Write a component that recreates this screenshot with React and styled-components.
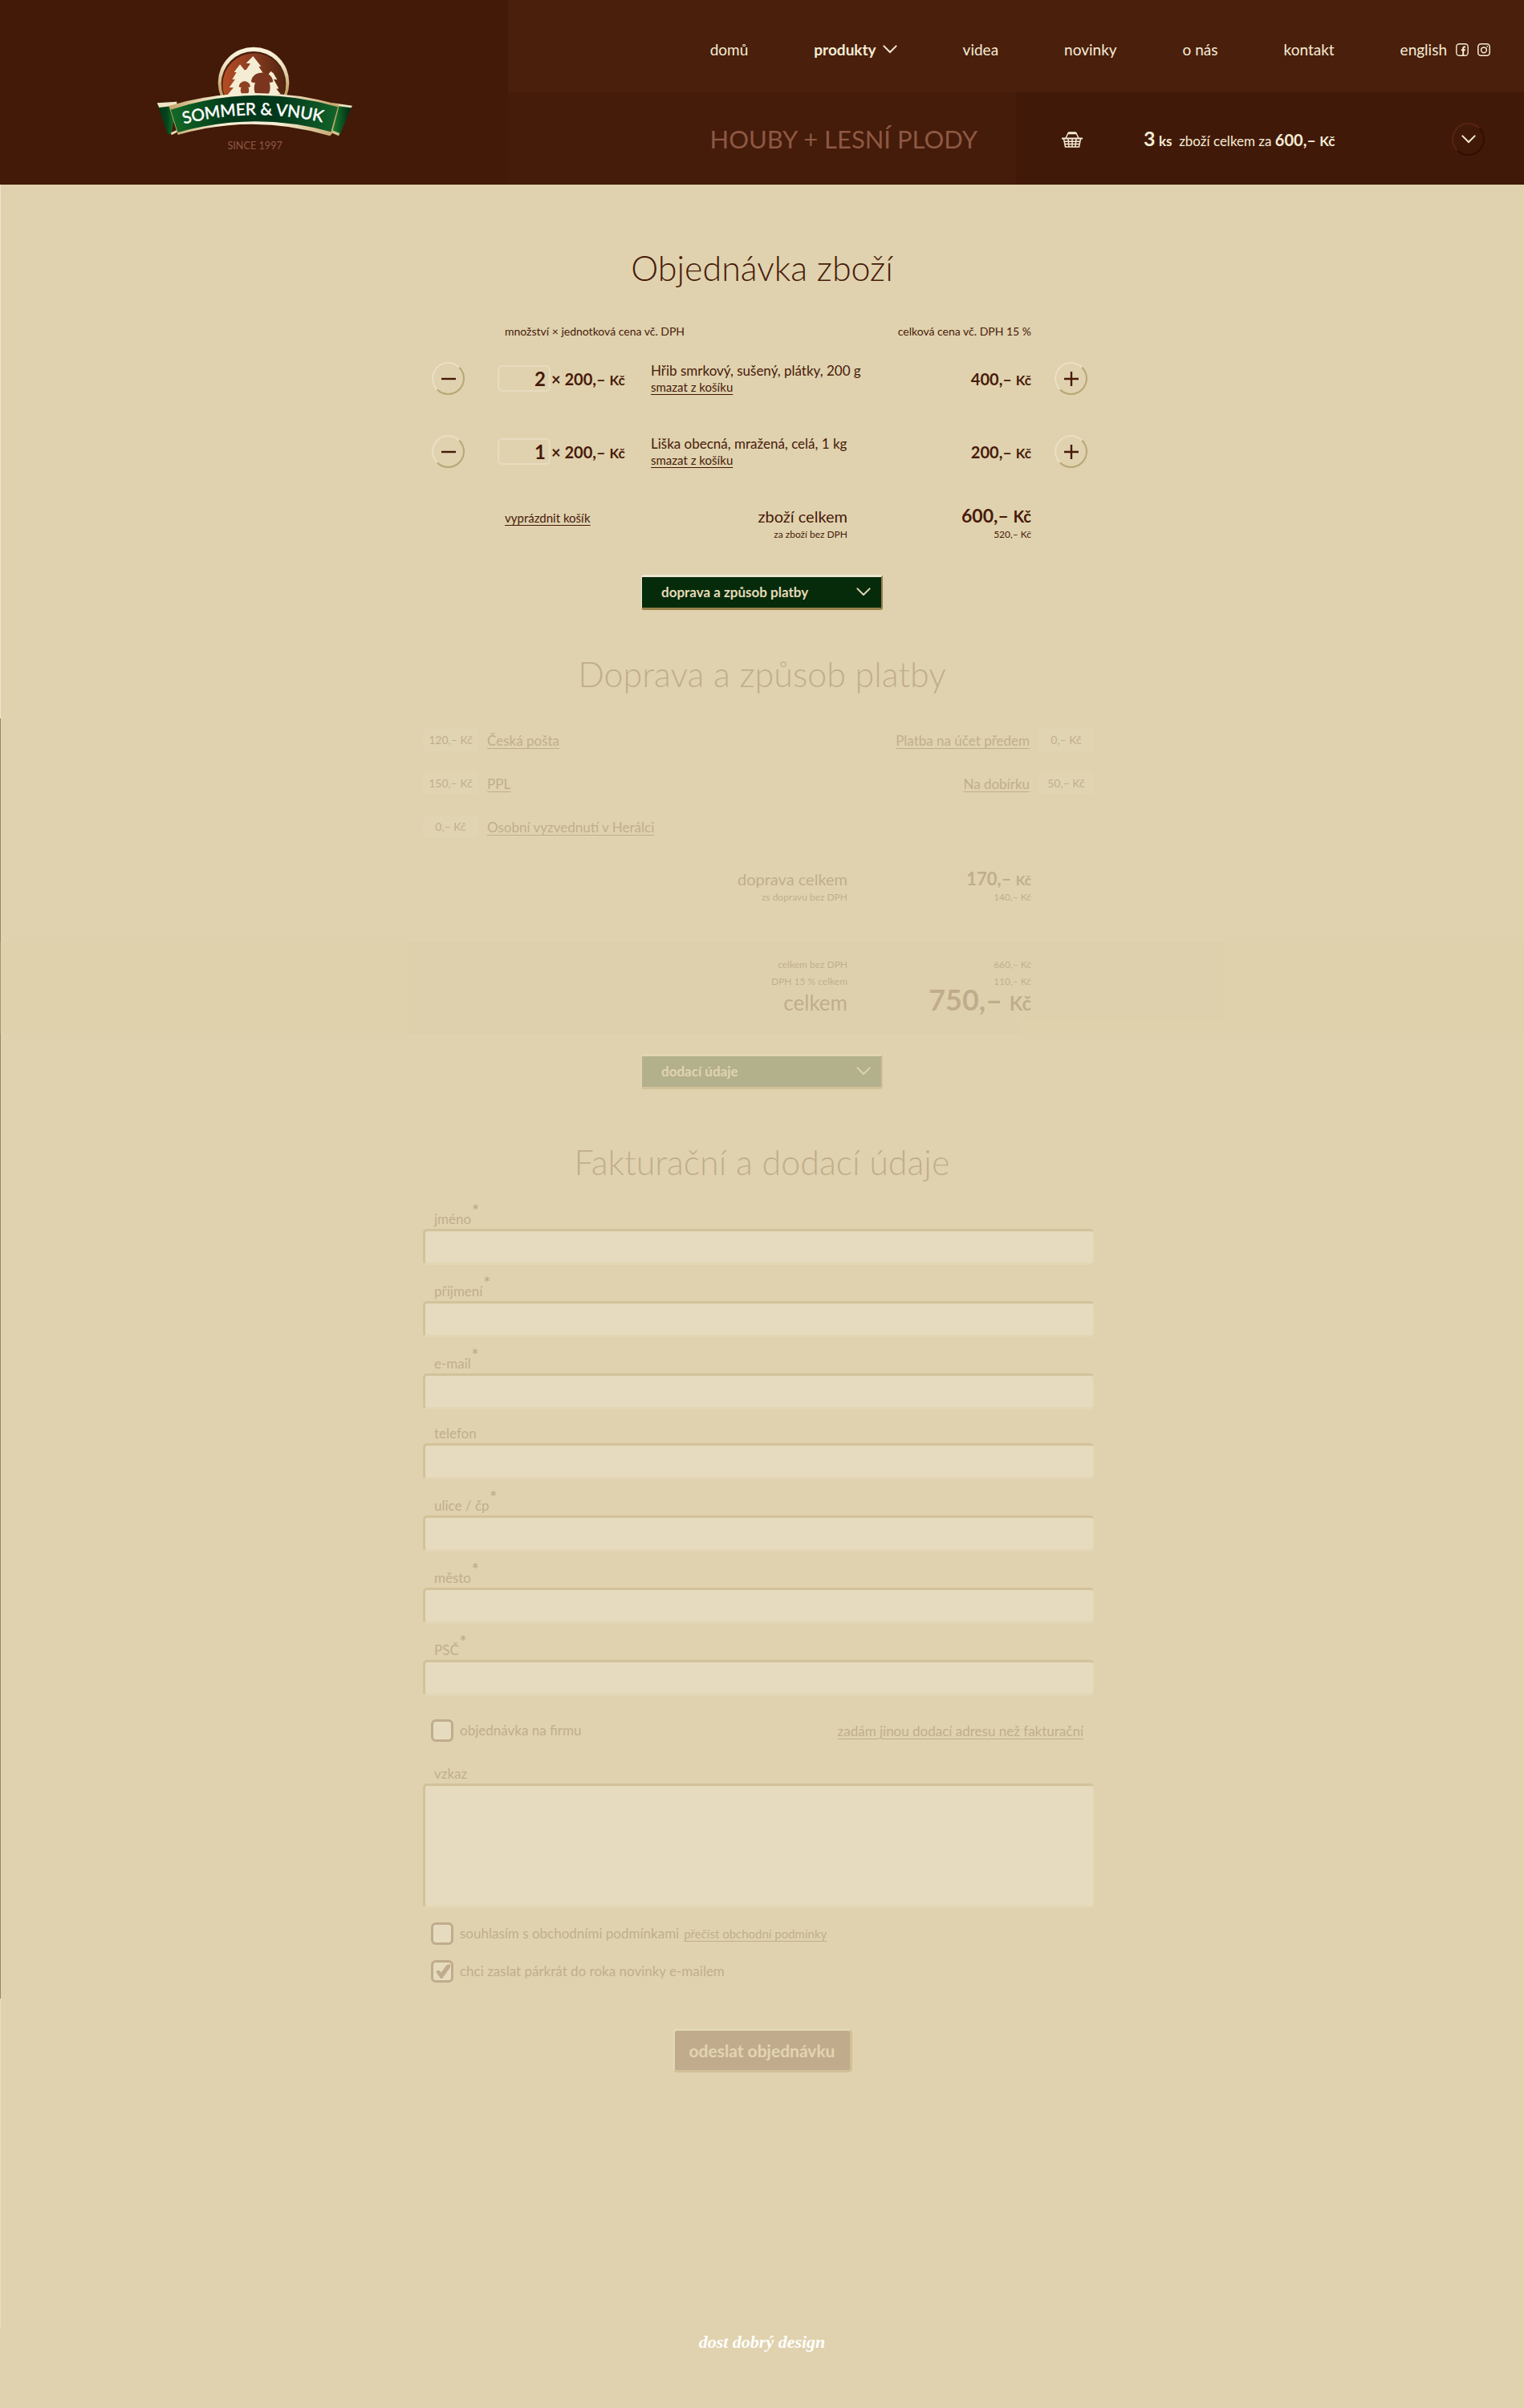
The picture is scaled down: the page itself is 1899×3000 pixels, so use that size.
import React, { useState } from "react";
import styled, { createGlobalStyle } from "styled-components";

const color = {
  page: "#e0d2ae",
  text: "#471a0a",
  cream: "#f5ecd6",
  green: "#052b0b",
  gold: "#96804a",
  light: "#efe6d0",
};

const GlobalStyle = createGlobalStyle`
  *, *::before, *::after { box-sizing: border-box; }
  body {
    margin: 0;
    background: ${color.page};
    color: ${color.text};
    font-family: Lato, "Open Sans", sans-serif;
    font-size: 17px;
  }
  button, input, textarea { font: inherit; color: inherit; }
`;

const Page = styled.div`
  display: flex;
  flex-direction: column;
  min-height: 100vh;
`;

/* Header */

const Header = styled.header`
  display: grid;
  grid-template-columns: repeat(3, 1fr);
  grid-template-rows: 115px 115px;
  color: ${color.cream};
`;

const LogoPanel = styled.a`
  grid-row: span 2;
  display: flex;
  justify-content: center;
  padding-top: 40px;
  background: #431908;
`;

const Nav = styled.nav`
  grid-column: span 2;
  display: flex;
  align-items: center;
  justify-content: flex-end;
  gap: 82px;
  padding: 8px 42px 0 0;
  background: #4a1f0b;
  white-space: nowrap;
`;

const NavLink = styled.a`
  display: flex;
  align-items: center;
  gap: 8px;
  color: inherit;
  font-size: 19px;
  font-weight: ${(p) => (p.$active ? 700 : 400)};
  line-height: 24px;
  text-decoration: none;
`;

const NavGroup = styled.div`
  display: flex;
  align-items: center;
  gap: 11px;
`;

const TitlePanel = styled.div`
  display: flex;
  align-items: center;
  justify-content: flex-end;
  padding-right: 48px;
  background: #451b0a;
`;

const Title = styled.h1`
  margin: 0;
  color: #8d5843;
  font-size: 31px;
  font-weight: 400;
  line-height: 40px;
  white-space: nowrap;
`;

const CartPanel = styled.div`
  display: flex;
  align-items: center;
  padding: 2px 49px 0 57px;
  background: #411908;
`;

const CartText = styled.p`
  margin: 0 auto 0 76px;
  font-size: 17px;
  line-height: 24px;
  white-space: nowrap;
`;

const Big = styled.b`
  font-size: ${(p) => p.$size}px;
`;

const RoundButton = styled.button`
  display: flex;
  align-items: center;
  justify-content: center;
  width: 41px;
  height: 41px;
  padding: 0;
  border: 2px solid;
  border-color: ${(p) =>
    p.$dark ? "#58240f #310f03 #310f03 #58240f" : "#eae0c6 #b9a676 #b9a676 #eae0c6"};
  border-radius: 50%;
  background: none;
  cursor: pointer;
`;

/* Sections */

const Main = styled.main`
  flex: 1;
  padding-top: 74px;
  background:
    linear-gradient(#eee5d0 0 665px, #9a8568 665px 2260px, #e8dcc0 2260px) left top / 1px 100% no-repeat;
`;

const Muted = styled.div`
  opacity: 0.2;
`;

const Column = styled.div`
  max-width: 845px;
  margin: 0 auto;
  padding-right: 9px;
`;

const Heading = styled.h2`
  margin: 0;
  font-size: 43px;
  font-weight: 300;
  line-height: 60px;
  text-align: center;
`;

const TextLink = styled.a`
  color: inherit;
  font-size: ${(p) => p.$size || 17}px;
  text-decoration: underline;
  text-decoration-thickness: 1px;
  text-underline-offset: 3px;
`;

const CartTable = styled.table`
  width: 100%;
  border-collapse: collapse;
  table-layout: fixed;
  white-space: nowrap;

  th {
    padding: 39px 0 3px;
    font-size: 14px;
    font-weight: 400;
    line-height: 20px;
    text-align: left;
  }
  th:nth-child(2) { padding-left: 9px; }
  td { height: 91px; padding: 0; }
  td:first-child { padding-left: 11px; }
  td:last-child { padding-left: 29px; }
  th:nth-child(3), td:nth-child(4) { text-align: right; }
`;

const Col = styled.col`
  width: ${(p) => p.$width};
`;

const Quantity = styled.label`
  display: flex;
  align-items: center;
  gap: 1px;
  font-weight: 700;
`;

const QuantityInput = styled.input`
  width: 66px;
  height: 33px;
  padding: 0 4px 0 0;
  border: 2px solid #e7dcc0;
  border-radius: 6px;
  background: none;
  font-size: 24px;
  font-weight: 700;
  text-align: right;
`;

const Product = styled.div`
  display: flex;
  flex-direction: column;
  align-items: flex-start;
  line-height: 20px;
`;

const Price = styled.span`
  font-size: ${(p) => p.$size}px;
  font-weight: 700;
`;

const Unit = styled.span`
  font-size: ${(p) => p.$size || 17}px;
`;

const TotalLine = styled.div`
  display: grid;
  grid-template-columns: 529fr 229fr 78fr;
  align-items: baseline;
  justify-items: end;
  font-size: ${(p) => p.$size}px;
  line-height: ${(p) => p.$line}px;
`;

const Totals = styled.div`
  padding-top: ${(p) => p.$top}px;
`;

const Split = styled.div`
  display: flex;
  align-items: baseline;
  justify-content: space-between;
  justify-self: stretch;
  padding-left: 102px;
`;

const StepButton = styled.button`
  display: flex;
  align-items: center;
  justify-content: space-between;
  width: 301px;
  height: 44px;
  margin: ${(p) => p.$top}px auto ${(p) => p.$bottom}px;
  padding: 0 13px 2px 24px;
  border: solid;
  border-width: 3px 2px 3px 1px;
  border-color: ${color.light} ${color.gold} ${color.gold} ${color.light};
  border-radius: 3px;
  background: ${color.green};
  color: #e6dab8;
  font-size: 17px;
  font-weight: 700;
  cursor: pointer;
`;

const Options = styled.div`
  display: flex;
  justify-content: space-between;
  padding-top: 25px;
`;

const OptionList = styled.ul`
  margin: 0;
  padding: 0;
  list-style: none;
`;

const Option = styled.li`
  display: flex;
  flex-direction: ${(p) => (p.$reverse ? "row-reverse" : "row")};
  align-items: center;
  gap: 11px;
  height: 54px;
`;

const OptionPrice = styled.span`
  width: 69px;
  border-radius: 4px;
  background: #e9dfc4;
  font-size: 14px;
  line-height: 28px;
  text-align: center;
`;

const Band = styled.div`
  margin-top: 46px;
  padding: 18px 0 26px;
  background: #dacda6;
`;

/* Form */

const Form = styled.form`
  padding-top: 8px;
`;

const Field = styled.div`
  display: flex;
  flex-direction: column;
  margin-top: ${(p) => p.$top || 0}px;
`;

const FieldLabel = styled.label`
  padding: ${(p) => (p.$required ? 21 : 18)}px 0 0 14px;
  line-height: 24px;
`;

const Star = styled.sup`
  padding-left: 1px;
  font-size: 20px;
  font-weight: 700;
  line-height: 0;
  vertical-align: 9px;
`;

const sunken = `
  border: solid;
  border-width: 3px 1px 3px 3px;
  border-color: #9f874f #efe6d0 #efe6d0 #9f874f;
  border-radius: 5px;
  background: #fff;
`;

const TextInput = styled.input`
  ${sunken}
  width: 100%;
  height: 45px;
  padding: 0 12px;
`;

const TextArea = styled.textarea`
  ${sunken}
  width: 100%;
  height: 155px;
  padding: 8px 12px;
  resize: none;
`;

const CheckRow = styled.div`
  display: flex;
  align-items: center;
  gap: 6px;
  margin-top: ${(p) => p.$top}px;
  padding: 0 13px 0 10px;
`;

const CheckLabel = styled.label`
  display: flex;
  align-items: center;
  gap: 8px;
  margin-right: ${(p) => (p.$push ? "auto" : 0)};
  line-height: 28px;
`;

const Checkbox = styled.input`
  display: grid;
  place-items: center;
  width: 28px;
  height: 28px;
  margin: 0;
  appearance: none;
  border: 3px solid ${color.text};
  border-radius: 6px;
  background: #fff;

  &:checked::before {
    content: "";
    width: 20px;
    height: 18px;
    background: ${color.text};
    clip-path: polygon(10% 52%, 28% 40%, 44% 58%, 78% 6%, 100% 0, 100% 22%, 50% 100%, 40% 100%);
  }
`;

const Submit = styled.button`
  display: block;
  min-width: 224px;
  height: 55px;
  margin: 57px auto 0;
  padding: 0 15px;
  border: 3px solid;
  border-color: ${color.light} ${color.gold} ${color.gold} ${color.light};
  border-radius: 5px;
  background: ${color.text};
  color: #efe0b8;
  font-size: 21px;
  font-weight: 700;
`;

const Footer = styled.footer`
  padding: 0 0 66px;
  text-align: center;
`;

const Credit = styled.a`
  color: #fff;
  font-family: "Liberation Serif", serif;
  font-size: 22px;
  font-style: italic;
  font-weight: 700;
  line-height: 32px;
  text-decoration: none;
`;

/* Drawings */

const Chevron = ({ width = 18 }) => (
  <svg width={width} height={width * 0.6} viewBox="0 0 20 12" fill="none" stroke="currentColor" strokeWidth="2.2" strokeLinecap="round" aria-hidden="true">
    <path d="M1.5 1.5 10 10l8.500-8.500" />
  </svg>
);

const Sign = ({ plus }) => (
  <svg width="18" height="18" viewBox="0 0 18 18" stroke="currentColor" strokeWidth="2.400" aria-hidden="true">
    <path d={plus ? "M0 9h18M9 0v18" : "M0 9h18"} />
  </svg>
);

const Facebook = () => (
  <svg width="16" height="16" viewBox="0 0 16 16" fill="none" stroke="currentColor" aria-hidden="true">
    <rect x=".8" y=".8" width="14.400" height="14.400" rx="3.500" strokeWidth="1.400" />
    <path d="M12 4.500h-1.200c-1.200 0-1.600.6-1.600 1.700V15M6.800 8.300h5" strokeWidth="2" />
  </svg>
);

const Instagram = () => (
  <svg width="16" height="16" viewBox="0 0 16 16" fill="none" stroke="currentColor" aria-hidden="true">
    <rect x=".8" y=".8" width="14.400" height="14.400" rx="3.500" strokeWidth="1.500" />
    <circle cx="8" cy="8.300" r="3.400" strokeWidth="1.500" />
    <circle cx="12.200" cy="3.800" r=".9" fill="currentColor" stroke="none" />
  </svg>
);

const Basket = () => (
  <svg width="26" height="20" viewBox="0 0 26 20" fill="none" stroke="currentColor" aria-hidden="true">
    <path d="M5 8 8 2h10l3 6" strokeWidth="1.500" />
    <path d="M9 1.800h8" strokeWidth="3" strokeLinecap="round" />
    <path d="M0 8.500h26" strokeWidth="2" />
    <path d="M2.500 9l2 10h17l2-10M3 12.200h20M4 15.400h18M8 9l1 10M13 9v10M18 9l-1 10" strokeWidth="1.500" />
  </svg>
);

const Logo = () => (
  <svg width="280" height="160" viewBox="-10 0 840 480" role="img" aria-label="Sommer & Vnuk">
    <defs>
      <linearGradient id="ring" x1="0" y1="0" x2="0" y2="1">
        <stop offset="0" stopColor="#fbf5df" />
        <stop offset=".25" stopColor="#efe4c4" />
        <stop offset=".6" stopColor="#c4a468" />
      </linearGradient>
      <linearGradient id="disc">
        <stop offset="0" stopColor="#b54c24" />
        <stop offset=".5" stopColor="#873b20" />
        <stop offset="1" stopColor="#52240f" />
      </linearGradient>
      <linearGradient id="band">
        <stop offset="0" stopColor="#136a26" />
        <stop offset=".35" stopColor="#02391b" />
        <stop offset=".65" stopColor="#02391b" />
        <stop offset="1" stopColor="#12632a" />
      </linearGradient>
      <linearGradient id="gold">
        <stop offset="0" stopColor="#c3a268" />
        <stop offset=".3" stopColor="#f6edd2" />
        <stop offset=".65" stopColor="#f6edd2" />
        <stop offset="1" stopColor="#c3a268" />
      </linearGradient>
      <linearGradient id="tailLeft">
        <stop offset="0" stopColor="#033417" />
        <stop offset=".5" stopColor="#04441c" />
        <stop offset="1" stopColor="#1c8430" />
      </linearGradient>
      <linearGradient id="tailRight">
        <stop offset="0" stopColor="#1c8430" />
        <stop offset=".8" stopColor="#033417" />
      </linearGradient>
      <path id="arc" d="M146 344Q410 276 684 342" />
    </defs>
    <circle cx="407" cy="189" r="133" fill="url(#ring)" />
    <circle cx="407" cy="193" r="121" fill="#4a1d10" />
    <circle cx="409" cy="197" r="118" fill="url(#disc)" />
    <path d="M405 90l30 38-9 1 18 26-6 1 14 30v52H307l25-31h-16l22-31-11 1 16-27-9-1 22-28 17 21 6-1 16-23-16-2z" fill="#f5edd3" />
    <path d="M471 146l10 8 14 24-13-2 19 35-9 1 16 20h-52v-48l12-18-5-9z" fill="#f5edd3" />
    <path d="M398 185c3-44 77-46 82 0-4 3-10 4-14 3 6 20 3 40-10 52h-36c-13-15-13-34-7-52-6 2-11 0-15-3z" fill="#7b351f" />
    <path d="M352 203c4-26 39-26 43 0-3 3-6 3-8 3 5 10 3 20-4 26h-19c-6-7-8-17-3-26-4 0-7 0-9-3z" fill="#8f3f22" />
    <path d="M46 265l74-5-20 122-14-1z" fill="url(#tailLeft)" />
    <path d="M46 265l74-5v14l-66 8z" fill="#efe4c4" />
    <path d="M98 376l22-10v9l-20 10z" fill="#e9dab3" />
    <path d="M776 275l-76-9-2 108 30 12z" fill="url(#tailRight)" />
    <path d="M776 275l-74-10v9l70 9z" fill="#efe4c4" />
    <path d="M700 366l28 12-3 10-28-12z" fill="#d9c390" />
    <path d="M90 276Q410 182 725 271v11L700 380l-8 8Q410 302 124 384z" fill="url(#gold)" />
    <path d="M97 290Q410 188 722 280L696 373Q410 294 124 375z" fill="url(#band)" />
    <text fill="#fff" fontFamily="Lato, sans-serif" fontSize="62" fontWeight="400" stroke="#fff" strokeWidth="1.500">
      <textPath href="#arc">SOMMER &amp; VNUK</textPath>
    </text>
    <text x="412" y="438" fill="#8d5843" fontFamily="Lato, sans-serif" fontSize="38" textAnchor="middle">SINCE 1997</text>
  </svg>
);

/* Content */

const initialItems = [
  { id: "hrib", name: "Hřib smrkový, sušený, plátky, 200 g", count: 2, price: 200 },
  { id: "liska", name: "Liška obecná, mražená, celá, 1 kg", count: 1, price: 200 },
];

const delivery = [
  ["120,– Kč", "Česká pošta"],
  ["150,– Kč", "PPL"],
  ["0,– Kč", "Osobní vyzvednutí v Herálci"],
];

const payment = [
  ["0,– Kč", "Platba na účet předem"],
  ["50,– Kč", "Na dobírku"],
];

const fields = [
  ["jmeno", "jméno", true],
  ["prijmeni", "příjmení", true],
  ["email", "e-mail", true],
  ["telefon", "telefon", false],
  ["ulice", "ulice / čp", true],
  ["mesto", "město", true],
  ["psc", "PSČ", true],
];

const Money = ({ value, size, unit }) => (
  <Price $size={size}>
    {value},– <Unit $size={unit}>Kč</Unit>
  </Price>
);

const OptionItems = ({ items, reverse }) => (
  <OptionList>
    {items.map(([price, name]) => (
      <Option key={name} $reverse={reverse}>
        <OptionPrice>{price}</OptionPrice>
        <TextLink href="#doprava">{name}</TextLink>
      </Option>
    ))}
  </OptionList>
);

export default function App() {
  const [items, setItems] = useState(initialItems);
  const change = (id, count) =>
    setItems(items.map((i) => (i.id === id ? { ...i, count: Math.max(0, count) } : i)));

  return (
    <Page>
      <GlobalStyle />
      <Header>
        <LogoPanel href="#domu">
          <Logo />
        </LogoPanel>
        <Nav>
          <NavLink href="#domu">domů</NavLink>
          <NavLink href="#produkty" $active>
            produkty <Chevron />
          </NavLink>
          <NavLink href="#videa">videa</NavLink>
          <NavLink href="#novinky">novinky</NavLink>
          <NavLink href="#onas">o nás</NavLink>
          <NavLink href="#kontakt">kontakt</NavLink>
          <NavGroup>
            <NavLink href="#english">english</NavLink>
            <NavLink href="#facebook" aria-label="Facebook"><Facebook /></NavLink>
            <NavLink href="#instagram" aria-label="Instagram"><Instagram /></NavLink>
          </NavGroup>
        </Nav>
        <TitlePanel>
          <Title>HOUBY + LESNÍ PLODY</Title>
        </TitlePanel>
        <CartPanel>
          <Basket />
          <CartText>
            <Big $size={25}>3</Big> <Big $size={17}>ks</Big>&nbsp; zboží celkem za <Big $size={20}>600,–</Big>{" "}
            <Big $size={17}>Kč</Big>
          </CartText>
          <RoundButton $dark aria-label="Zobrazit košík">
            <Chevron />
          </RoundButton>
        </CartPanel>
      </Header>

      <Main>
        <Heading>Objednávka zboží</Heading>
        <Column>
          <CartTable>
            <colgroup>
              <Col $width="93px" />
              <Col $width="191px" />
              <Col />
              <Col $width="229px" />
              <Col $width="78px" />
            </colgroup>
            <thead>
              <tr>
                <th />
                <th colSpan={2}>množství × jednotková cena vč. DPH</th>
                <th>celková cena vč. DPH 15 %</th>
                <th />
              </tr>
            </thead>
            <tbody>
              {items.map((item) => (
                <tr key={item.id}>
                  <td>
                    <RoundButton aria-label="Ubrat" onClick={() => change(item.id, item.count - 1)}>
                      <Sign />
                    </RoundButton>
                  </td>
                  <td>
                    <Quantity>
                      <QuantityInput
                        value={item.count}
                        aria-label={item.name}
                        onChange={(e) => change(item.id, Number(e.target.value) || 0)}
                      />
                      <Price $size={20}>× <Money value={item.price} size={20} /></Price>
                    </Quantity>
                  </td>
                  <td>
                    <Product>
                      {item.name}
                      <TextLink href="#smazat" $size={15}>smazat z košíku</TextLink>
                    </Product>
                  </td>
                  <td>
                    <Money value={item.count * item.price} size={20} />
                  </td>
                  <td>
                    <RoundButton aria-label="Přidat" onClick={() => change(item.id, item.count + 1)}>
                      <Sign plus />
                    </RoundButton>
                  </td>
                </tr>
              ))}
            </tbody>
          </CartTable>
          <Totals $top={22}>
            <TotalLine $size={20} $line={24}>
              <Split>
                <TextLink href="#vyprazdnit" $size={15}>vyprázdnit košík</TextLink>
                <span>zboží celkem</span>
              </Split>
              <Money value={600} size={23} unit={20} />
            </TotalLine>
            <TotalLine $size={12} $line={18}>
              <span>za zboží bez DPH</span>
              <span>520,– Kč</span>
            </TotalLine>
          </Totals>
        </Column>
        <StepButton $top={41} $bottom={50}>
          doprava a způsob platby <Chevron />
        </StepButton>

        <Muted>
          <Heading id="doprava">Doprava a způsob platby</Heading>
          <Column>
            <Options>
              <OptionItems items={delivery} />
              <OptionItems items={payment} reverse />
            </Options>
            <Totals $top={26}>
              <TotalLine $size={20} $line={24}>
                <span>doprava celkem</span>
                <Money value={170} size={22} />
              </TotalLine>
              <TotalLine $size={12} $line={18}>
                <span>zs dopravu bez DPH</span>
                <span>140,– Kč</span>
              </TotalLine>
            </Totals>
          </Column>
          <Band>
            <Column>
              <TotalLine $size={12} $line={21}>
                <span>celkem bez DPH</span>
                <span>660,– Kč</span>
              </TotalLine>
              <TotalLine $size={12} $line={21}>
                <span>DPH 15 % celkem</span>
                <span>110,– Kč</span>
              </TotalLine>
              <TotalLine $size={26} $line={24}>
                <span>celkem</span>
                <Money value={750} size={36} unit={24} />
              </TotalLine>
            </Column>
          </Band>
          <StepButton $top={25} $bottom={61}>
            dodací údaje <Chevron />
          </StepButton>

          <Heading>Fakturační a dodací údaje</Heading>
          <Form>
            <Column>
              {fields.map(([id, label, required]) => (
                <Field key={id}>
                  <FieldLabel htmlFor={id} $required={required}>
                    {label}
                    {required && <Star>*</Star>}
                  </FieldLabel>
                  <TextInput id={id} />
                </Field>
              ))}
              <CheckRow $top={29}>
                <CheckLabel $push>
                  <Checkbox type="checkbox" />
                  objednávka na firmu
                </CheckLabel>
                <TextLink href="#adresa">zadám jinou dodací adresu než fakturační</TextLink>
              </CheckRow>
              <Field $top={10}>
                <FieldLabel htmlFor="vzkaz">vzkaz</FieldLabel>
                <TextArea id="vzkaz" />
              </Field>
              <CheckRow $top={18}>
                <CheckLabel>
                  <Checkbox type="checkbox" />
                  souhlasím s obchodními podmínkami
                </CheckLabel>
                <TextLink href="#podminky" $size={15}>přečíst obchodní podmínky</TextLink>
              </CheckRow>
              <CheckRow $top={19}>
                <CheckLabel>
                  <Checkbox type="checkbox" defaultChecked />
                  chci zaslat párkrát do roka novinky e-mailem
                </CheckLabel>
              </CheckRow>
            </Column>
            <Submit type="button">odeslat objednávku</Submit>
          </Form>
        </Muted>
      </Main>

      <Footer>
        <Credit href="#design">dost dobrý design</Credit>
      </Footer>
    </Page>
  );
}
